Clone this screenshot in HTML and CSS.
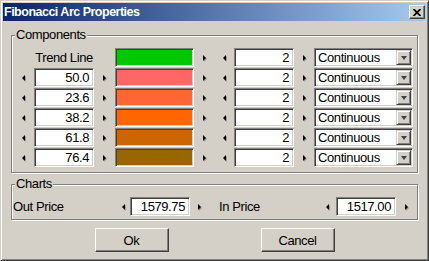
FILE: index.html
```html
<!DOCTYPE html>
<html lang="en">
<head>
    <meta charset="UTF-8">
    <title>Fibonacci Arc Properties</title>
    <link rel="stylesheet" href="styles.css">
</head>
<body>
    <div class="window">
        <div class="titlebar">
            <span class="title">Fibonacci Arc Properties</span>
            <span class="close-btn">
                <svg width="8" height="7" viewBox="0 0 8 7"><path d="M0.5 0 L7.5 7 M7.5 0 L0.5 7" stroke="#000" stroke-width="1.8"/></svg>
            </span>
        </div>
        <div class="content">
            <fieldset class="group">
                <legend>Components</legend>
                <div class="grid">
                    <span class="spin"></span>
                    <span class="label-cell">Trend Line</span>
                    <span class="spin"></span>
                    <span class="swatch c0"></span>
                    <span class="spin right"></span>
                    <span class="spin left"></span>
                    <span class="field">2</span>
                    <span class="spin right"></span>
                    <span class="combo"><span class="combo-text">Continuous</span><span class="combo-btn"></span></span>

                    <span class="spin left"></span>
                    <span class="field">50.0</span>
                    <span class="spin right"></span>
                    <span class="swatch c1"></span>
                    <span class="spin right"></span>
                    <span class="spin left"></span>
                    <span class="field">2</span>
                    <span class="spin right"></span>
                    <span class="combo"><span class="combo-text">Continuous</span><span class="combo-btn"></span></span>

                    <span class="spin left"></span>
                    <span class="field">23.6</span>
                    <span class="spin right"></span>
                    <span class="swatch c2"></span>
                    <span class="spin right"></span>
                    <span class="spin left"></span>
                    <span class="field">2</span>
                    <span class="spin right"></span>
                    <span class="combo"><span class="combo-text">Continuous</span><span class="combo-btn"></span></span>

                    <span class="spin left"></span>
                    <span class="field">38.2</span>
                    <span class="spin right"></span>
                    <span class="swatch c3"></span>
                    <span class="spin right"></span>
                    <span class="spin left"></span>
                    <span class="field">2</span>
                    <span class="spin right"></span>
                    <span class="combo"><span class="combo-text">Continuous</span><span class="combo-btn"></span></span>

                    <span class="spin left"></span>
                    <span class="field">61.8</span>
                    <span class="spin right"></span>
                    <span class="swatch c4"></span>
                    <span class="spin right"></span>
                    <span class="spin left"></span>
                    <span class="field">2</span>
                    <span class="spin right"></span>
                    <span class="combo"><span class="combo-text">Continuous</span><span class="combo-btn"></span></span>

                    <span class="spin left"></span>
                    <span class="field">76.4</span>
                    <span class="spin right"></span>
                    <span class="swatch c5"></span>
                    <span class="spin right"></span>
                    <span class="spin left"></span>
                    <span class="field">2</span>
                    <span class="spin right"></span>
                    <span class="combo"><span class="combo-text">Continuous</span><span class="combo-btn"></span></span>
                </div>
            </fieldset>

            <fieldset class="group charts">
                <legend>Charts</legend>
                <div class="chart-row">
                    <span class="chart-label out">Out Price</span>
                    <span class="spin left w14"></span>
                    <span class="field">1579.75</span>
                    <span class="spin right w18"></span>
                    <span class="chart-label in">In Price</span>
                    <span class="spin left w18"></span>
                    <span class="field">1517.00</span>
                    <span class="spin right w20"></span>
                </div>
            </fieldset>

            <div class="buttons">
                <button class="btn">Ok</button>
                <button class="btn">Cancel</button>
            </div>
        </div>
    </div>
</body>
</html>
```

FILE: styles.css
```css
body {
    margin: 0;
    font-family: "Liberation Sans", Arial, sans-serif;
    font-size: 13px;
    letter-spacing: -0.4px;
    color: #000;
    background: #d4d0c8;
}

.window {
    width: 429px;
    height: 261px;
    box-sizing: border-box;
    padding: 2px;
    background: #d4d0c8;
    border: 1px solid;
    border-color: #d4d0c8 #404040 #404040 #d4d0c8;
    box-shadow: inset 1px 1px #fff, inset -1px -1px #808080;
}

.titlebar {
    height: 18px;
    display: flex;
    align-items: center;
    justify-content: space-between;
    padding: 0 1px 0 1px;
    background: linear-gradient(to right, #0a246a, #a6caf0);
}

.title {
    color: #fff;
    font-weight: bold;
    font-size: 12.5px;
    letter-spacing: -0.5px;
}

.close-btn {
    width: 16px;
    height: 14px;
    box-sizing: border-box;
    display: flex;
    align-items: center;
    justify-content: center;
    background: #d4d0c8;
    border: 1px solid;
    border-color: #fff #404040 #404040 #fff;
    box-shadow: inset -1px -1px #808080;
}

.close-btn svg {
    display: block;
}

.content {
    padding: 7px 8px 0;
}

.group {
    margin: 0;
    min-width: 0;
    padding: 6px 0 5px;
    border: 1px solid #808080;
    box-shadow: 1px 1px #fff, inset 1px 1px #fff;
}

.group legend {
    margin-left: 3px;
    padding: 0 1px;
    line-height: 14px;
    background: #d4d0c8;
}

.charts {
    margin-top: 4px;
    padding-bottom: 3px;
}

.grid {
    display: grid;
    grid-template-columns: 22px 60px 21px 79px 20px 20px 60px 20px 99px;
    grid-auto-rows: 19px;
    row-gap: 1px;
}

.spin {
    display: flex;
    align-items: center;
    justify-content: center;
}

.spin.left::before,
.spin.right::before {
    content: "";
    width: 0;
    height: 0;
    border-style: solid;
    filter: drop-shadow(1px 1px 0 #9a9a9a);
}

.spin.left::before {
    border-width: 3px 3px 3px 0;
    border-color: transparent #000 transparent transparent;
}

.spin.right::before {
    border-width: 3px 0 3px 3px;
    border-color: transparent transparent transparent #000;
}

.w14 { width: 14px; }
.w18 { width: 18px; }
.w20 { width: 20px; }

.label-cell {
    text-align: center;
    line-height: 19px;
}

.field,
.swatch,
.combo {
    box-sizing: border-box;
    height: 19px;
    border: 1px solid;
    border-color: #808080 #fff #fff #808080;
    box-shadow: inset 1px 1px #404040, inset -1px -1px #d4d0c8;
}

.field {
    width: 60px;
    background: #fff;
    text-align: right;
    padding-right: 4px;
    line-height: 17px;
}

.c0 { background: #00c800; }
.c1 { background: #ff6666; }
.c2 { background: #ff6633; }
.c3 { background: #ff6600; }
.c4 { background: #cc6600; }
.c5 { background: #996600; }

.combo {
    display: flex;
    align-items: center;
    padding: 1px;
    background: #fff;
}

.combo-text {
    flex: 1;
    padding-left: 2px;
    line-height: 15px;
}

.combo-btn {
    width: 15px;
    height: 15px;
    box-sizing: border-box;
    display: flex;
    align-items: center;
    justify-content: center;
    background: #d4d0c8;
    border: 1px solid;
    border-color: #d4d0c8 #404040 #404040 #d4d0c8;
    box-shadow: inset 1px 1px #fff, inset -1px -1px #808080;
}

.combo-btn::before {
    content: "";
    width: 0;
    height: 0;
    border-style: solid;
    border-width: 4px 3.5px 0;
    border-color: #404040 transparent transparent;
}

.chart-row {
    display: flex;
    height: 19px;
    align-items: stretch;
}

.chart-label {
    line-height: 19px;
}

.chart-label.out {
    width: 103px;
    padding-left: 1px;
}

.chart-label.in {
    width: 99px;
    padding-left: 11px;
}

.buttons {
    display: flex;
    justify-content: center;
    gap: 92px;
    margin-top: 8px;
}

.btn {
    width: 74px;
    height: 24px;
    box-sizing: border-box;
    padding: 0;
    font-family: inherit;
    font-size: 13px;
    letter-spacing: -0.4px;
    color: #000;
    background: #d4d0c8;
    border: 1px solid;
    border-color: #fff #404040 #404040 #fff;
    box-shadow: inset -1px -1px #808080;
}
```
